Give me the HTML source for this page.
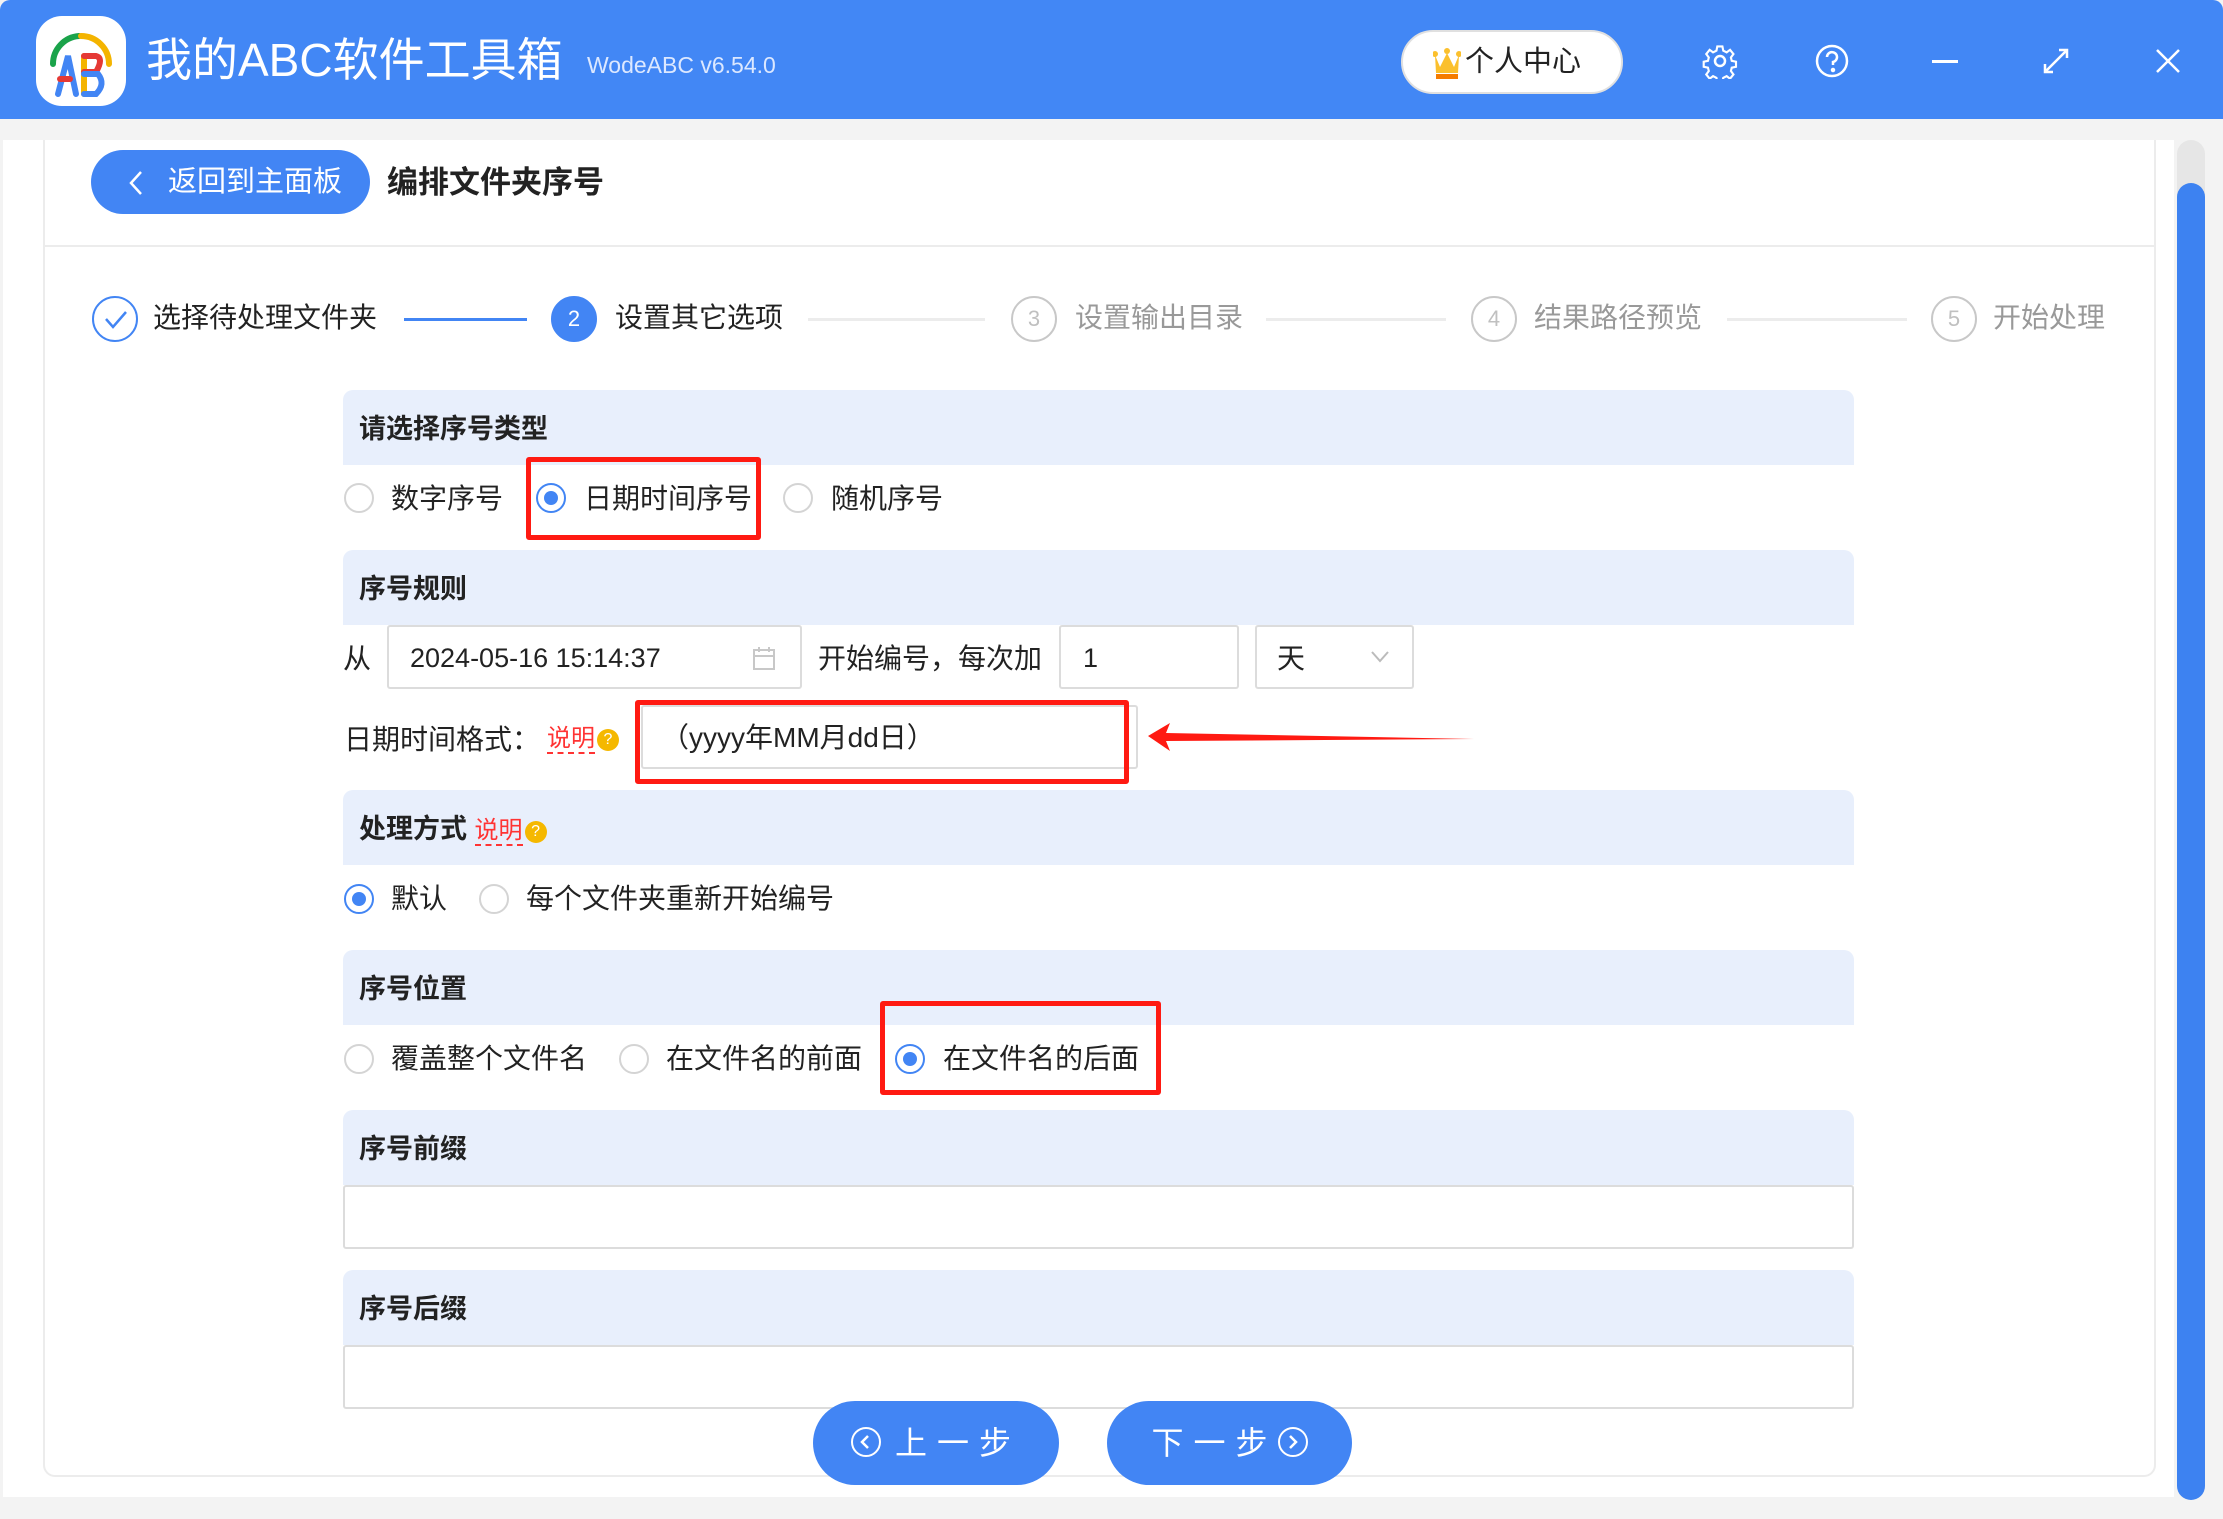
<!DOCTYPE html>
<html><head><meta charset="utf-8"><style>
*{margin:0;padding:0;box-sizing:border-box}
body{width:2223px;height:1519px;position:relative;background:#f3f3f3;font-family:"Liberation Sans","Noto Sans CJK SC",sans-serif;color:#222;overflow:hidden}
.a{position:absolute}
.t{position:absolute;white-space:nowrap;line-height:1}
.hdr{position:absolute;left:343px;width:1511px;height:75px;background:#e8effc;border-radius:10px 10px 0 0}
.hdr>span{position:absolute;left:16px;top:26px;font-size:27px;font-weight:bold;color:#222;white-space:nowrap;line-height:1}
.rad{position:absolute;width:30px;height:30px;border:2px solid #d4d4d4;border-radius:50%;background:#fff}
.rad.on{border-color:#4285f4}
.rad.on::after{content:"";position:absolute;left:6px;top:6px;width:14px;height:14px;border-radius:50%;background:#4285f4}
.lbl{position:absolute;font-size:28px;white-space:nowrap;line-height:1;color:#222}
.inp{position:absolute;background:#fff;border:2px solid #dcdcdc;border-radius:3px}
.red{position:absolute;border:5px solid #ff1a12;border-radius:3px}
.circ{position:absolute;width:46px;height:46px;border-radius:50%;border:2px solid #c8c8c8;color:#c0c0c0;font-size:22px;text-align:center;line-height:42px}
.step{position:absolute;font-size:28px;top:304px;line-height:1;white-space:nowrap;color:#999}
.ln{position:absolute;top:318px;height:3px;background:#ececec}
.q{display:inline-block;width:22px;height:22px;border-radius:50%;background:#f5b800;color:#fff;font-size:16px;text-align:center;line-height:22px;vertical-align:2px;margin-left:2px;font-weight:normal}
.sm{color:#f33;font-size:24px;border-bottom:2px dashed #f33;font-weight:normal}
.btn{position:absolute;background:#4285f4;border-radius:42px;color:#fff;font-size:32px;text-align:center;line-height:84px;letter-spacing:10px}
</style></head><body>
<div class="a" style="left:0;top:0;width:2223px;height:119px;background:#4287f5;border-radius:10px 10px 0 0"></div>
<div class="a" style="left:36px;top:16px;width:90px;height:90px;background:#fff;border-radius:26px"></div>
<svg class="a" style="left:36px;top:16px" width="90" height="90" viewBox="0 0 90 90">
<path d="M17 48 A28 28 0 0 1 43 20" stroke="#1aa34a" stroke-width="6" fill="none" stroke-linecap="round"/>
<path d="M45 20 A28 28 0 0 1 73 48" stroke="#f4b400" stroke-width="6" fill="none" stroke-linecap="round"/>
<path d="M22 78 L32 40 L40 78" stroke="#4285f4" stroke-width="6" fill="none" stroke-linecap="round"/>
<path d="M24 63 L34 63" stroke="#e53935" stroke-width="6" stroke-linecap="round"/>
<path d="M48 40 L48 78" stroke="#f4b400" stroke-width="6" stroke-linecap="round"/>
<path d="M48 40 L60 40 Q68 42 60 56 L48 56" stroke="#e53935" stroke-width="6" fill="none" stroke-linecap="round"/>
<path d="M48 58 L62 58 Q70 68 60 78 L48 78" stroke="#4285f4" stroke-width="6" fill="none" stroke-linecap="round"/>
</svg>
<div class="t" style="left:146px;top:37px;font-size:46px;color:#fff">我的ABC软件工具箱</div>
<div class="t" style="left:587px;top:54px;font-size:23px;color:#dce8ff">WodeABC v6.54.0</div>
<div class="a" style="left:1401px;top:30px;width:222px;height:64px;background:#fff;border-radius:32px;border:2px solid #e0e0e0"></div>
<svg class="a" style="left:1433px;top:45px" width="28" height="36" viewBox="0 0 28 36"><path d="M2 10 L7 22 L14 8 L21 22 L26 10 L25 28 L3 28Z" fill="#fbc02d"/><circle cx="2" cy="9" r="3" fill="#fbc02d"/><circle cx="14" cy="6" r="3" fill="#fbc02d"/><circle cx="26" cy="9" r="3" fill="#fbc02d"/><rect x="3" y="29" width="22" height="5" fill="#f57c00"/></svg>
<div class="t" style="left:1465px;top:48px;font-size:29px;color:#222">个人中心</div>
<svg class="a" style="left:1702px;top:43px" width="36" height="36" viewBox="0 0 36 36" fill="none" stroke="#fff" stroke-width="2.5"><path d="M15 3h6l1 5 4 2 4-3 4 5-3 4 1 4 5 1v6l-5 1-1 4 3 4-4 5-4-3-4 2-1 5h-6l-1-5-4-2-4 3-4-5 3-4-1-4-5-1v-6l5-1 1-4-3-4 4-5 4 3 4-2z" transform="scale(.85) translate(3 1)"/><circle cx="18" cy="18" r="5"/></svg>
<svg class="a" style="left:1815px;top:44px" width="34" height="34" viewBox="0 0 34 34" fill="none" stroke="#fff" stroke-width="2.5"><circle cx="17" cy="17" r="15"/><path d="M12 13a5 5 0 1 1 6 5v3"/><circle cx="18" cy="26" r="1" fill="#fff"/></svg>
<div class="a" style="left:1932px;top:60px;width:26px;height:3px;background:#fff"></div>
<svg class="a" style="left:2040px;top:45px" width="32" height="32" viewBox="0 0 32 32" fill="none" stroke="#fff" stroke-width="2.5"><path d="M5 27 L27 5 M19 5h8v8 M5 19v8h8"/></svg>
<svg class="a" style="left:2155px;top:48px" width="26" height="26" viewBox="0 0 26 26" stroke="#fff" stroke-width="2.5"><path d="M2 2L24 24M24 2L2 24"/></svg>

<div class="a" style="left:3px;top:140px;width:2171px;height:1357px;background:#fff"></div>
<div class="a" style="left:43px;top:140px;width:2113px;height:1337px;background:#fff;border:2px solid #ececec;border-top:none;border-radius:0 0 12px 12px"></div>
<div class="a" style="left:2177px;top:140px;width:28px;height:1360px;background:#e6e6e6;border-radius:14px"></div>
<div class="a" style="left:2177px;top:183px;width:28px;height:1317px;background:#3d82f1;border-radius:14px"></div>

<div class="a" style="left:91px;top:150px;width:279px;height:64px;background:#4285f4;border-radius:32px"></div>
<svg class="a" style="left:128px;top:170px" width="16" height="26" viewBox="0 0 16 26" fill="none" stroke="#fff" stroke-width="2.5"><path d="M13 2L3 13L13 24"/></svg>
<div class="t" style="left:168px;top:168px;font-size:29px;color:#fff">返回到主面板</div>
<div class="t" style="left:387px;top:167px;font-size:31px;font-weight:bold;color:#222">编排文件夹序号</div>
<div class="a" style="left:43px;top:245px;width:2113px;height:2px;background:#ececec"></div>

<div class="circ" style="left:92px;top:296px;border-color:#4285f4"></div>
<svg class="a" style="left:104px;top:310px" width="24" height="20" viewBox="0 0 24 20" fill="none" stroke="#4285f4" stroke-width="2.5"><path d="M2 9L9 17L22 2"/></svg>
<div class="step" style="left:153px;color:#222">选择待处理文件夹</div>
<div class="ln" style="left:404px;width:123px;background:#4285f4"></div>
<div class="circ" style="left:551px;top:296px;background:#4285f4;border-color:#4285f4;color:#fff">2</div>
<div class="step" style="left:615px;color:#222">设置其它选项</div>
<div class="ln" style="left:808px;width:177px"></div>
<div class="circ" style="left:1011px;top:296px">3</div>
<div class="step" style="left:1075px">设置输出目录</div>
<div class="ln" style="left:1266px;width:180px"></div>
<div class="circ" style="left:1471px;top:296px">4</div>
<div class="step" style="left:1534px">结果路径预览</div>
<div class="ln" style="left:1727px;width:180px"></div>
<div class="circ" style="left:1931px;top:296px">5</div>
<div class="step" style="left:1993px">开始处理</div>

<div class="hdr" style="top:390px"><span>请选择序号类型</span></div>
<div class="rad" style="left:344px;top:483px"></div><div class="lbl" style="left:391px;top:485px">数字序号</div>
<div class="rad on" style="left:536px;top:483px"></div><div class="lbl" style="left:584px;top:485px">日期时间序号</div>
<div class="rad" style="left:783px;top:483px"></div><div class="lbl" style="left:831px;top:485px">随机序号</div>
<div class="red" style="left:526px;top:457px;width:235px;height:83px"></div>

<div class="hdr" style="top:550px"><span>序号规则</span></div>
<div class="lbl" style="left:343px;top:645px">从</div>
<div class="inp" style="left:387px;top:625px;width:415px;height:64px"></div>
<div class="lbl" style="left:410px;top:645px;font-size:27px">2024-05-16 15:14:37</div>
<svg class="a" style="left:752px;top:645px" width="24" height="26" viewBox="0 0 24 26" fill="none" stroke="#c8c8c8" stroke-width="2"><rect x="2" y="5" width="20" height="19"/><path d="M2 11h20M7 2v5M17 2v5"/></svg>
<div class="lbl" style="left:818px;top:645px">开始编号，每次加</div>
<div class="inp" style="left:1059px;top:625px;width:180px;height:64px"></div>
<div class="lbl" style="left:1083px;top:645px;font-size:27px">1</div>
<div class="inp" style="left:1255px;top:625px;width:159px;height:64px"></div>
<div class="lbl" style="left:1277px;top:645px">天</div>
<svg class="a" style="left:1370px;top:650px" width="20" height="14" viewBox="0 0 20 14" fill="none" stroke="#bbb" stroke-width="2"><path d="M2 2L10 11L18 2"/></svg>
<div class="lbl" style="left:344px;top:726px">日期时间格式：</div>
<div class="t" style="left:547px;top:727px"><span class="sm">说明</span><span class="q">?</span></div>
<div class="inp" style="left:641px;top:705px;width:497px;height:64px"></div>
<div class="lbl" style="left:661px;top:724px;font-size:28px">（yyyy年MM月dd日）</div>
<div class="red" style="left:635px;top:700px;width:494px;height:84px"></div>
<svg class="a" style="left:1148px;top:722px" width="332" height="30" viewBox="0 0 332 30"><path d="M0 14 L22 1 L18 11 L326 17 L18 19 L22 29Z" fill="#ff1a12"/></svg>

<div class="hdr" style="top:790px"><span>处理方式 <span class="sm">说明</span><span class="q">?</span></span></div>
<div class="rad on" style="left:344px;top:884px"></div><div class="lbl" style="left:391px;top:885px">默认</div>
<div class="rad" style="left:479px;top:884px"></div><div class="lbl" style="left:526px;top:885px">每个文件夹重新开始编号</div>

<div class="hdr" style="top:950px"><span>序号位置</span></div>
<div class="rad" style="left:344px;top:1044px"></div><div class="lbl" style="left:391px;top:1045px">覆盖整个文件名</div>
<div class="rad" style="left:619px;top:1044px"></div><div class="lbl" style="left:666px;top:1045px">在文件名的前面</div>
<div class="rad on" style="left:895px;top:1044px"></div><div class="lbl" style="left:943px;top:1045px">在文件名的后面</div>
<div class="red" style="left:880px;top:1001px;width:281px;height:94px"></div>

<div class="hdr" style="top:1110px"><span>序号前缀</span></div>
<div class="inp" style="left:343px;top:1185px;width:1511px;height:64px"></div>
<div class="hdr" style="top:1270px"><span>序号后缀</span></div>
<div class="inp" style="left:343px;top:1345px;width:1511px;height:64px"></div>

<div class="btn" style="left:813px;top:1401px;width:246px;height:84px"><span style="display:inline-block;width:30px;height:30px;border:2.5px solid #fff;border-radius:50%;vertical-align:-3px;margin-right:14px;position:relative"><svg style="position:absolute;left:6px;top:5px" width="12" height="16" viewBox="0 0 12 16" fill="none" stroke="#fff" stroke-width="2.5"><path d="M9 2L3 8L9 14"/></svg></span>上一步</div>
<div class="btn" style="left:1107px;top:1401px;width:245px;height:84px">下一步<span style="display:inline-block;width:30px;height:30px;border:2.5px solid #fff;border-radius:50%;vertical-align:-3px;position:relative"><svg style="position:absolute;left:7px;top:5px" width="12" height="16" viewBox="0 0 12 16" fill="none" stroke="#fff" stroke-width="2.5"><path d="M3 2L9 8L3 14"/></svg></span></div>
</body></html>
